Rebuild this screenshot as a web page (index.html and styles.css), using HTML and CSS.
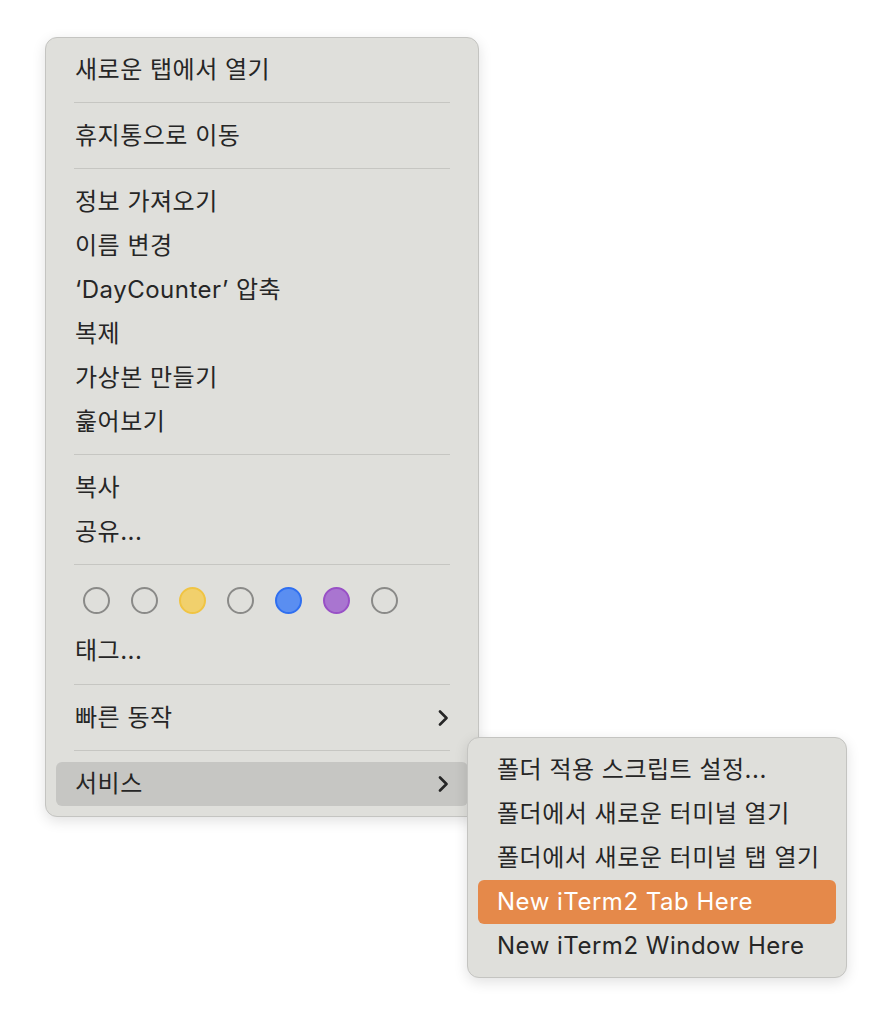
FILE: index.html
```html
<!DOCTYPE html>
<html lang="ko">
<head>
    <meta charset="UTF-8">
    <title>컨텍스트 메뉴</title>
    <link rel="stylesheet" href="styles.css">
</head>
<body>
    <div class="desktop">
        <!-- Main context menu -->
        <div class="menu main-menu">
            <div class="item">새로운 탭에서 열기</div>
            <div class="separator"></div>
            <div class="item">휴지통으로 이동</div>
            <div class="separator"></div>
            <div class="item">정보 가져오기</div>
            <div class="item">이름 변경</div>
            <div class="item">‘DayCounter’ 압축</div>
            <div class="item">복제</div>
            <div class="item">가상본 만들기</div>
            <div class="item">훑어보기</div>
            <div class="separator"></div>
            <div class="item">복사</div>
            <div class="item">공유...</div>
            <div class="separator"></div>
            <div class="tags">
                <span class="tag"></span>
                <span class="tag"></span>
                <span class="tag yellow"></span>
                <span class="tag"></span>
                <span class="tag blue"></span>
                <span class="tag purple"></span>
                <span class="tag"></span>
            </div>
            <div class="item tall">태그...</div>
            <div class="separator"></div>
            <div class="item has-sub">
                <span>빠른 동작</span>
                <svg class="chevron" viewBox="0 0 12 16"><path d="M3 1.5 L9.5 8 L3 14.5"/></svg>
            </div>
            <div class="separator"></div>
            <div class="item has-sub open">
                <span>서비스</span>
                <svg class="chevron" viewBox="0 0 12 16"><path d="M3 1.5 L9.5 8 L3 14.5"/></svg>
            </div>
        </div>

        <!-- Services submenu -->
        <div class="menu sub-menu">
            <div class="item">폴더 적용 스크립트 설정...</div>
            <div class="item">폴더에서 새로운 터미널 열기</div>
            <div class="item">폴더에서 새로운 터미널 탭 열기</div>
            <div class="item selected">New iTerm2 Tab Here</div>
            <div class="item">New iTerm2 Window Here</div>
        </div>
    </div>
</body>
</html>
```

FILE: styles.css
```css
body {
    margin: 0;
    background-color: #ffffff;
    font-family: Inter, "Noto Sans CJK KR", sans-serif;
    color: #262626;
}

.desktop {
    position: relative;
    width: 892px;
    height: 1032px;
}

.menu {
    position: absolute;
    box-sizing: border-box;
    background-color: #dfdfdb;
    border: 1px solid #c4c4c1;
    border-radius: 12px;
    box-shadow: 0 4px 14px rgba(0,0,0,0.12);
    padding: 10px 10px;
}

.main-menu {
    left: 45px;
    top: 37px;
    width: 434px;
    height: 780px;
}

.sub-menu {
    left: 467px;
    top: 737px;
    width: 380px;
    height: 241px;
}

.item {
    display: flex;
    align-items: center;
    justify-content: space-between;
    height: 44px;
    padding: 0 19px 0 19px;
    border-radius: 6px;
    font-size: 24px;
    letter-spacing: 0.5px;
    line-height: 44px;
    white-space: nowrap;
}

.item.tall {
    height: 46px;
    line-height: 42px;
}

.item.open {
    background-color: #c6c6c3;
}

.item.selected {
    background-color: #e5894a;
    color: #ffffff;
}

.separator {
    height: 1px;
    margin: 10px 18px 11px 18px;
    background-color: #c6c6c2;
}

.chevron {
    width: 12px;
    height: 16px;
}

.chevron path {
    fill: none;
    stroke: #262626;
    stroke-width: 2.6;
    stroke-linecap: round;
    stroke-linejoin: round;
}

.tags {
    display: flex;
    gap: 21px;
    height: 52px;
    align-items: flex-start;
    padding-left: 27px;
    padding-top: 11px;
    box-sizing: border-box;
}

.tag {
    box-sizing: border-box;
    width: 27px;
    height: 27px;
    border-radius: 50%;
    border: 2px solid #8a8a88;
}

.tag.yellow {
    background-color: #f1d06c;
    border-color: #f0c443;
}

.tag.blue {
    background-color: #5a8ef1;
    border-color: #2f6ff0;
}

.tag.purple {
    background-color: #a975d0;
    border-color: #9850c6;
}
```
